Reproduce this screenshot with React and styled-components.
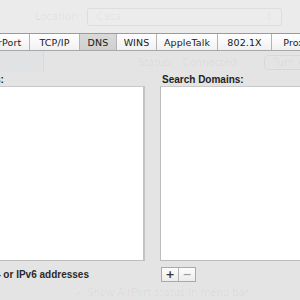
import styled, { createGlobalStyle } from 'styled-components';

const GlobalStyle = createGlobalStyle`
  html, body {
    margin: 0;
    padding: 0;
    background: #e6e6e6;
    overflow: hidden;
  }
`;

const Page = styled.div`
  width: 300px;
  height: 300px;
  overflow: hidden;
  background: #e6e6e6;
  font-family: 'DejaVu Sans', 'Liberation Sans', sans-serif;
  color: #1e1e1e;
`;

// the dialog is wider than the crop, shift it left
const Window = styled.div`
  width: 440px;
  margin-left: -60px;
  display: flex;
  flex-direction: column;
`;

const TopBar = styled.div`
  height: 33px;
  background: #ebebeb;
  display: flex;
  align-items: center;
  padding-left: 95px;
  box-sizing: border-box;
`;

const Faded = styled.span`
  font-size: 10px;
  color: rgba(0, 0, 0, ${(p) => p.$alpha || 0.06});
  white-space: nowrap;
`;

const Popup = styled.div`
  width: 195px;
  height: 18px;
  margin-left: 6px;
  border: 1px solid rgba(0, 0, 0, 0.06);
  border-radius: 3px;
  background: #ececec;
  display: flex;
  align-items: center;
  justify-content: space-between;
  padding: 0 7px 0 9px;
  box-sizing: border-box;
`;

const TabBar = styled.div`
  height: 16px;
  display: flex;
  border-top: 1px solid #9a9a9a;
  border-bottom: 1px solid #a8a8a8;
  background: linear-gradient(#ffffff, #f1f1f1);
  padding-left: 41px;
`;

const Tab = styled.div`
  width: ${(p) => p.$w}px;
  flex: none;
  display: flex;
  align-items: center;
  justify-content: center;
  font-size: 9.5px;
  letter-spacing: 0.1px;
  border-right: 1px solid #b4b4b4;
  box-sizing: border-box;
  color: #1a1a1a;
  background: ${(p) => (p.$active ? 'linear-gradient(#dadada, #cfcfcf)' : 'transparent')};
`;

const StatusRow = styled.div`
  height: 23px;
  display: flex;
  align-items: center;
  background: #e4e4e4;
`;

const GhostBlock = styled.div`
  width: 43px;
  height: 21px;
  margin-left: 60px;
  align-self: flex-start;
  background: #e1e2e4;
  border-right: 1px solid rgba(0, 0, 0, 0.03);
`;

const GhostButton = styled.div`
  width: 60px;
  height: 15px;
  margin-left: auto;
  margin-right: 56px;
  border: 1px solid rgba(0, 0, 0, 0.05);
  border-radius: 4px;
  display: flex;
  align-items: center;
  padding-left: 8px;
  box-sizing: border-box;
`;

const Body = styled.div`
  background: #e4e4e4;
  display: flex;
  flex-direction: column;
`;

const Columns = styled.div`
  display: flex;
  gap: 15px;
`;

const Column = styled.div`
  width: 205px;
  display: flex;
  flex-direction: column;
`;

const Label = styled.div`
  font-family: 'Liberation Sans', Arial, sans-serif;
  font-weight: bold;
  font-size: 10px;
  height: 12px;
  line-height: 12px;
  color: #222;
  padding-left: ${(p) => p.$indent || 0}px;
  white-space: nowrap;
`;

const List = styled.div`
  height: 175px;
  background: #ffffff;
  border: 1px solid #bdbdbd;
  border-top-color: #c9c9c9;
  border-right: 2px solid #c3c3c3;
  box-sizing: border-box;
`;

const Footer = styled.div`
  display: flex;
  align-items: center;
  height: 15px;
  margin-top: 6px;
  padding-left: ${(p) => p.$indent || 0}px;
`;

const ButtonGroup = styled.div`
  display: flex;
  border: 1px solid #a9a9a9;
  height: 15px;
  box-sizing: border-box;
  background: linear-gradient(#fdfdfd, #ececec);
`;

const SquareButton = styled.div`
  width: 16px;
  display: flex;
  align-items: center;
  justify-content: center;
  font-family: 'DejaVu Sans', sans-serif;
  font-weight: bold;
  font-size: 11px;
  line-height: 1;
  color: ${(p) => (p.$dim ? '#a0a0a0' : '#333')};
  & + & {
    border-left: 1px solid #b5b5b5;
  }
`;

const Hint = styled.span`
  font-family: 'Liberation Sans', Arial, sans-serif;
  font-weight: bold;
  font-size: 10px;
  color: #2a2a2a;
  margin-left: ${(p) => p.$gap}px;
  white-space: nowrap;
`;

const CheckRow = styled.div`
  height: 20px;
  display: flex;
  align-items: center;
  padding-left: 135px;
  gap: 4px;
`;

const tabs = [
  ['AirPort', 49],
  ['TCP/IP', 50],
  ['DNS', 37],
  ['WINS', 40],
  ['AppleTalk', 61],
  ['802.1X', 54],
  ['Proxies', 58],
  ['Ethernet', 60],
];

export default function App() {
  return (
    <Page>
      <GlobalStyle />
      <Window>
        <TopBar>
          <Faded>Location:</Faded>
          <Popup>
            <Faded $alpha={0.05}>Casa</Faded>
            <Faded>⇕</Faded>
          </Popup>
        </TopBar>
        <TabBar>
          {tabs.map(([name, w]) => (
            <Tab key={name} $w={w} $active={name === 'DNS'}>
              {name}
            </Tab>
          ))}
        </TabBar>
        <StatusRow>
          <GhostBlock />
          <Faded $alpha={0.05} style={{ marginLeft: 94 }}>
            Status:&nbsp;&nbsp; Connected
          </Faded>
          <GhostButton>
            <Faded $alpha={0.05}>Turn AirPort Off</Faded>
          </GhostButton>
        </StatusRow>
        <Body>
          <Columns>
            <Column>
              <Label>DNS Servers:</Label>
            </Column>
            <Column>
              <Label $indent={2}>Search Domains:</Label>
            </Column>
          </Columns>
          <Columns>
            <Column>
              <List />
            </Column>
            <Column>
              <List />
            </Column>
          </Columns>
          <Columns>
            <Column>
              <Footer>
                <ButtonGroup>
                  <SquareButton>+</SquareButton>
                  <SquareButton $dim>−</SquareButton>
                </ButtonGroup>
                <Hint $gap={5}>IPv4 or IPv6 addresses</Hint>
              </Footer>
            </Column>
            <Column>
              <Footer $indent={1}>
                <ButtonGroup>
                  <SquareButton>+</SquareButton>
                  <SquareButton $dim>−</SquareButton>
                </ButtonGroup>
              </Footer>
            </Column>
          </Columns>
          <CheckRow>
            <Faded $alpha={0.05}>✓</Faded>
            <Faded $alpha={0.05}>Show AirPort status in menu bar</Faded>
          </CheckRow>
        </Body>
      </Window>
    </Page>
  );
}
